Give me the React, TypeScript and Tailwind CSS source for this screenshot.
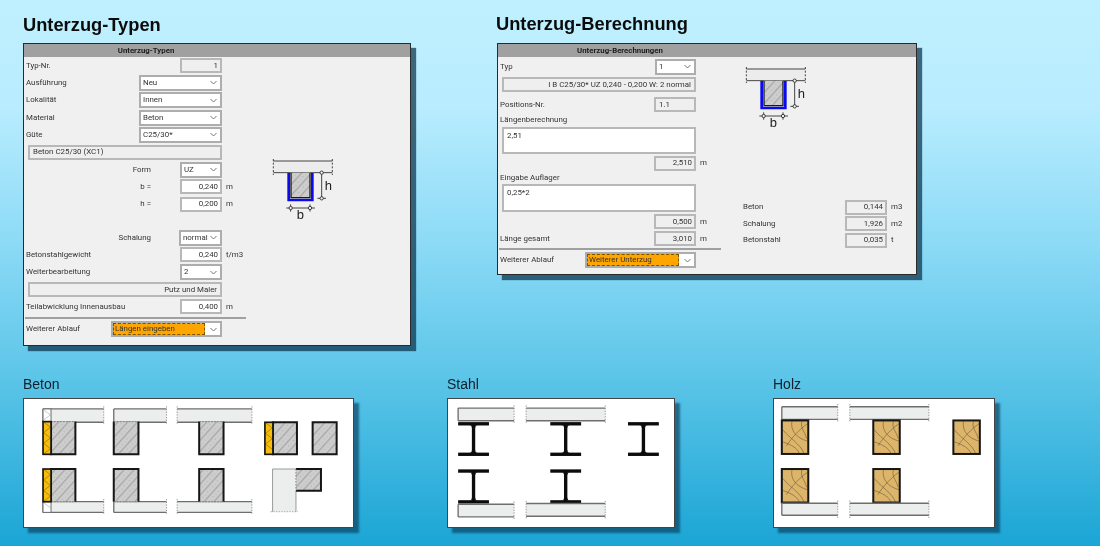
import type { ReactNode } from 'react';

const slabFill = '#eceeee';
const slabLine = '#6e6e6e';
const beamLine = '#161616';

function Chevron() {
  return (
    <svg width="7" height="5" viewBox="0 0 7 5" className="shrink-0">
      <path d="M0.5 1 L3.5 4 L6.5 1" fill="none" stroke="#666" strokeWidth="0.9" />
    </svg>
  );
}

function Select({ value, className }: { value: string; className: string }) {
  return (
    <div className={`flex h-[16px] items-center justify-between border-2 border-[#adadad] bg-white pl-[2px] pr-[3px] ${className}`}>
      <span>{value}</span>
      <Chevron />
    </div>
  );
}

function HotSelect({ value, className }: { value: string; className: string }) {
  return (
    <div className={`flex h-[16px] items-center justify-between border-2 border-[#adadad] bg-white pr-[3px] ${className}`}>
      <span className="flex h-[12px] flex-1 items-center border border-dashed border-[#7a5500] bg-[#ffa500] pl-[1px]">{value}</span>
      <span className="ml-[5px]">
        <Chevron />
      </span>
    </div>
  );
}

function Field({ value, white = false, left = false }: { value: string; white?: boolean; left?: boolean }) {
  return (
    <div
      className={`flex h-[15px] w-[42px] items-center border-2 border-[#b8b8b8] px-[2px] ${left ? 'justify-start pl-[3px]' : 'justify-end'} ${white ? 'bg-white' : 'bg-[#efefef]'}`}
    >
      {value}
    </div>
  );
}

function Row({ label, unit, right = false, children }: { label?: string; unit?: string; right?: boolean; children: ReactNode }) {
  return (
    <div className="flex h-[17.33px] items-center">
      <div className="flex w-[196px] items-center justify-between">
        <span className={right ? 'w-[125px] text-right' : ''}>{label}</span>
        {children}
      </div>
      {unit && <span className="ml-[4px]">{unit}</span>}
    </div>
  );
}

function Band({ text, right = false }: { text: string; right?: boolean }) {
  return (
    <div className={`ml-[2px] flex h-[15px] w-[194px] items-center border-2 border-[#b8b8b8] bg-[#efefef] px-[3px] ${right ? 'justify-end' : ''}`}>
      {text}
    </div>
  );
}

function Window({ title, className, children }: { title: string; className: string; children: ReactNode }) {
  return (
    <div className={`border border-[#2a2a2a] bg-[#f0f0f0] text-[7.9px] leading-none text-[#333] shadow-[5px_5px_1px_rgba(10,50,75,0.72)] ${className}`} style={{ fontFamily: 'Roboto, "Open Sans", sans-serif' }}>
      <div className="flex h-[13px] items-center bg-[#a0a0a0]">
        <span className="w-[244px] text-center text-[7.8px] font-bold text-[#1c1c1c]">{title}</span>
      </div>
      {children}
    </div>
  );
}

function Hatch({ id }: { id: string }) {
  return (
    <pattern id={id} width="22" height="22" patternUnits="userSpaceOnUse" patternTransform="rotate(-48)">
      <rect width="22" height="22" fill="#cdcdcd" />
      <line x1="0" y1="5" x2="22" y2="5" stroke="#828282" strokeWidth="2" />
      <circle cx="7" cy="16" r="1.3" fill="#8a8a8a" />
      <circle cx="17" cy="17" r="1.1" fill="#8a8a8a" />
    </pattern>
  );
}

function Section() {
  return (
    <svg width="80" height="75" viewBox="0 0 240 225" className="shrink-0">
      <defs>
        <Hatch id="sec" />
      </defs>
      <rect x="40" y="30" width="177" height="35" fill="#ececec" />
      <line x1="40" y1="30" x2="217" y2="30" stroke="#222" strokeWidth="2.5" />
      <line x1="40" y1="65" x2="217" y2="65" stroke="#222" strokeWidth="2.5" />
      <line x1="40" y1="24" x2="40" y2="72" stroke="#222" strokeWidth="2.5" strokeDasharray="6 5" />
      <line x1="217" y1="24" x2="217" y2="72" stroke="#222" strokeWidth="2.5" strokeDasharray="6 5" />
      <rect x="93" y="65" width="57" height="75" fill="url(#sec)" />
      <path d="M86 66 V147 H157 V66" fill="none" stroke="#0a0aee" strokeWidth="8" />
      <path d="M93 66 V140 H150 V66" fill="none" stroke="#1a1a1a" strokeWidth="4" />
      <line x1="185" y1="65" x2="185" y2="142" stroke="#222" strokeWidth="2.5" />
      <line x1="172" y1="142" x2="198" y2="142" stroke="#222" strokeWidth="2.5" />
      <circle cx="185" cy="65" r="5" fill="#f0f0f0" stroke="#222" strokeWidth="2.5" />
      <circle cx="185" cy="142" r="5" fill="#f0f0f0" stroke="#222" strokeWidth="2.5" />
      <line x1="79" y1="171" x2="165" y2="171" stroke="#222" strokeWidth="2.5" />
      <line x1="92" y1="160" x2="92" y2="182" stroke="#222" strokeWidth="2.5" />
      <line x1="150" y1="160" x2="150" y2="182" stroke="#222" strokeWidth="2.5" />
      <circle cx="92" cy="171" r="5" fill="#f0f0f0" stroke="#222" strokeWidth="2.5" />
      <circle cx="150" cy="171" r="5" fill="#f0f0f0" stroke="#222" strokeWidth="2.5" />
      <text x="194" y="116" fontSize="39" fill="#222" fontFamily="Liberation Sans, sans-serif">h</text>
      <text x="110" y="203" fontSize="39" fill="#222" fontFamily="Liberation Sans, sans-serif">b</text>
    </svg>
  );
}

function Slab({ x, y, w, h, closedLeft = false }: { x: number; y: number; w: number; h: number; closedLeft?: boolean }) {
  return (
    <g>
      <rect x={x} y={y} width={w} height={h} fill={slabFill} />
      <line x1={x} y1={y} x2={x + w} y2={y} stroke={slabLine} strokeWidth="4" />
      <line x1={x} y1={y + h} x2={x + w} y2={y + h} stroke={slabLine} strokeWidth="4" />
      {closedLeft ? (
        <line x1={x} y1={y} x2={x} y2={y + h} stroke={slabLine} strokeWidth="4" />
      ) : (
        <line x1={x} y1={y - 8} x2={x} y2={y + h + 8} stroke="#888" strokeWidth="2.5" strokeDasharray="4 4" />
      )}
      <line x1={x + w} y1={y - 8} x2={x + w} y2={y + h + 8} stroke="#888" strokeWidth="2.5" strokeDasharray="4 4" />
    </g>
  );
}

function Beam({ x, y, w, h, open }: { x: number; y: number; w: number; h: number; open?: 'top' | 'bottom' | 'left' }) {
  const outline = open === 'top'
    ? `M${x} ${y} V${y + h} H${x + w} V${y}`
    : open === 'bottom'
      ? `M${x} ${y + h} V${y} H${x + w} V${y + h}`
      : open === 'left'
        ? `M${x} ${y} H${x + w} V${y + h} H${x}`
        : `M${x} ${y} H${x + w} V${y + h} H${x} Z`;
  return (
    <g>
      <rect x={x} y={y} width={w} height={h} fill="url(#concrete)" />
      <path d={outline} fill="none" stroke={beamLine} strokeWidth="6" />
      {open === 'top' && <line x1={x} y1={y} x2={x + w} y2={y} stroke="#777" strokeWidth="2.5" strokeDasharray="5 4" />}
      {open === 'bottom' && <line x1={x} y1={y + h} x2={x + w} y2={y + h} stroke="#777" strokeWidth="2.5" strokeDasharray="5 4" />}
      {open === 'left' && <line x1={x} y1={y} x2={x} y2={y + h} stroke="#777" strokeWidth="2.5" strokeDasharray="5 4" />}
    </g>
  );
}

function Zigzag({ x, y, w, h, stroke }: { x: number; y: number; w: number; h: number; stroke: string }) {
  const step = 16;
  const points: string[] = [];
  for (let i = 0; i * step <= h; i++) {
    points.push(`${i % 2 ? x + w : x},${y + i * step}`);
  }
  return <polyline points={points.join(' ')} fill="none" stroke={stroke} strokeWidth="1.6" />;
}

function Insulation({ x, y, h }: { x: number; y: number; h: number }) {
  return (
    <g>
      <rect x={x} y={y} width="24" height={h} fill="#f7bd0c" />
      <Zigzag x={x + 2} y={y + 1} w={20} h={h - 2} stroke="#7a5a00" />
      <rect x={x} y={y} width="24" height={h} fill="none" stroke={beamLine} strokeWidth="5" />
    </g>
  );
}

function SlabEnd({ x, y, h }: { x: number; y: number; h: number }) {
  return (
    <g>
      <rect x={x} y={y} width="24" height={h} fill="#fff" />
      <Zigzag x={x + 1} y={y + 2} w={21} h={h - 4} stroke="#999" />
      <rect x={x} y={y} width="24" height={h} fill="none" stroke={slabLine} strokeWidth="3" />
    </g>
  );
}

function BetonDrawing() {
  return (
    <svg viewBox="13 73 986 382" className="h-full w-full">
      <defs>
        <Hatch id="concrete" />
      </defs>
      <Slab x={70} y={102} w={182} h={40} closedLeft />
      <SlabEnd x={70} y={102} h={38} />
      <Beam x={94} y={140} w={73} h={98} open="top" />
      <Insulation x={70} y={140} h={98} />
      <Slab x={282} y={102} w={158} h={40} closedLeft />
      <Beam x={282} y={140} w={74} h={98} open="top" />
      <Slab x={472} y={102} w={224} h={40} />
      <Beam x={538} y={140} w={73} h={98} open="top" />
      <Beam x={759} y={142} w={72} h={96} />
      <Insulation x={735} y={142} h={96} />
      <Beam x={878} y={142} w={72} h={96} />

      <Slab x={70} y={380} w={182} h={32} closedLeft />
      <SlabEnd x={70} y={380} h={32} />
      <Beam x={94} y={282} w={73} h={98} open="bottom" />
      <Insulation x={70} y={282} h={98} />
      <Slab x={282} y={380} w={158} h={32} closedLeft />
      <Beam x={282} y={282} w={74} h={98} open="bottom" />
      <Slab x={472} y={380} w={224} h={32} />
      <Beam x={538} y={282} w={73} h={98} open="bottom" />
      <path d="M758 410 V282 H828 V410" fill={slabFill} stroke="none" />
      <line x1="758" y1="282" x2="758" y2="410" stroke="#999" strokeWidth="3" />
      <line x1="758" y1="282" x2="828" y2="282" stroke="#999" strokeWidth="3" />
      <line x1="828" y1="347" x2="828" y2="410" stroke="#999" strokeWidth="3" />
      <line x1="752" y1="410" x2="834" y2="410" stroke="#999" strokeWidth="2.5" strokeDasharray="4 4" />
      <Beam x={828} y={282} w={75} h={65} open="left" />
    </svg>
  );
}

function IBeam({ cx, top, bottom }: { cx: number; top: number; bottom: number }) {
  return (
    <g fill="#0c0c0c">
      <rect x={cx - 46} y={top - 5} width="92" height="10" />
      <rect x={cx - 46} y={bottom - 5} width="92" height="10" />
      <rect x={cx - 5} y={top} width="10" height={bottom - top} />
      <path d={`M${cx - 13} ${top + 4} Q${cx - 5} ${top + 4} ${cx - 5} ${top + 12} H${cx + 5} Q${cx + 5} ${top + 4} ${cx + 13} ${top + 4} Z`} />
      <path d={`M${cx - 13} ${bottom - 4} Q${cx - 5} ${bottom - 4} ${cx - 5} ${bottom - 12} H${cx + 5} Q${cx + 5} ${bottom - 4} ${cx + 13} ${bottom - 4} Z`} />
    </g>
  );
}

function StahlDrawing() {
  return (
    <svg viewBox="25 73 674 382" className="h-full w-full">
      <Slab x={55} y={100} w={167} h={38} closedLeft />
      <Slab x={258} y={100} w={236} h={38} />
      <IBeam cx={101} top={147} bottom={238} />
      <IBeam cx={376} top={147} bottom={238} />
      <IBeam cx={608} top={147} bottom={238} />
      <IBeam cx={101} top={288} bottom={380} />
      <IBeam cx={376} top={288} bottom={380} />
      <Slab x={55} y={387} w={167} h={38} closedLeft />
      <Slab x={258} y={385} w={236} h={38} />
    </svg>
  );
}

function Timber({ x, y }: { x: number; y: number }) {
  return (
    <g transform={`translate(${x} ${y})`}>
      <rect width="79" height="100" fill="#dcb56a" />
      <g fill="none" stroke="#6a5a3c" strokeWidth="1.8">
        <path d="M3 28 C25 55 55 70 66 98" />
        <path d="M3 64 C28 72 48 84 52 98" />
        <path d="M30 3 C26 30 42 52 77 62" />
        <path d="M76 10 C56 24 30 50 14 76" />
        <path d="M60 3 C54 24 70 34 74 54" />
      </g>
      <rect width="79" height="100" fill="none" stroke="#161616" strokeWidth="6" />
    </g>
  );
}

function HolzDrawing() {
  return (
    <svg viewBox="29 73 656 382" className="h-full w-full">
      <Slab x={52} y={96} w={167} h={38} closedLeft />
      <Slab x={255} y={96} w={236} h={38} />
      <Timber x={52} y={137} />
      <Timber x={325} y={137} />
      <Timber x={564} y={137} />
      <Timber x={52} y={282} />
      <Timber x={325} y={282} />
      <Slab x={52} y={384} w={167} h={36} closedLeft />
      <Slab x={255} y={384} w={236} h={36} />
    </svg>
  );
}

function Card({ title, className, children }: { title: string; className: string; children: ReactNode }) {
  return (
    <div className={className}>
      <div className="flex h-[23px] items-center pb-[5px] text-[14px] text-[#10202c]">{title}</div>
      <div className="h-[130px] border border-[#444] bg-white shadow-[5px_5px_2px_rgba(10,60,90,0.65)]">{children}</div>
    </div>
  );
}

export default function App() {
  return (
    <div
      className="h-screen w-full overflow-hidden bg-[linear-gradient(180deg,#bff0ff_0%,#b8ecfe_20%,#8bdaf6_45%,#5cc5e8_69%,#1ba5d5_100%)]"
      style={{ fontFamily: '"Liberation Sans", Arial, sans-serif' }}
    >
      <div className="blur-[0.35px]">
        <div className="flex h-[375px] pl-[23px]">
          <div className="w-[388px]">
            <h1 className="flex h-[43px] items-center pt-[7px] text-[18.3px] font-bold text-[#0b0b0b]">Unterzug-Typen</h1>
            <Window title="Unterzug-Typen" className="h-[303px]">
              <div className="flex">
                <div className="w-[222px] pl-[2px]">
                  <Row label="Typ-Nr."><Field value="1" /></Row>
                  <Row label="Ausführung"><Select value="Neu" className="w-[83px]" /></Row>
                  <Row label="Lokalität"><Select value="Innen" className="w-[83px]" /></Row>
                  <Row label="Material"><Select value="Beton" className="w-[83px]" /></Row>
                  <Row label="Güte"><Select value="C25/30*" className="w-[83px]" /></Row>
                  <div className="flex h-[17.33px] items-center"><Band text="Beton C25/30 (XC1)" /></div>
                  <Row label="Form" right><Select value="UZ" className="w-[42px]" /></Row>
                  <Row label="b =" right unit="m"><Field value="0,240" white /></Row>
                  <Row label="h =" right unit="m"><Field value="0,200" white /></Row>
                  <div className="h-[16px]" />
                  <Row label="Schalung" right><Select value="normal" className="w-[43px]" /></Row>
                  <Row label="Betonstahlgewicht" unit="t/m3"><Field value="0,240" white /></Row>
                  <Row label="Weiterbearbeitung"><Select value="2" className="w-[42px]" /></Row>
                  <div className="flex h-[17.33px] items-center"><Band text="Putz und Maler" right /></div>
                  <Row label="Teilabwicklung Innenausbau" unit="m"><Field value="0,400" white /></Row>
                  <div className="mt-[1px] ml-[-1px] h-[2px] w-[221px] bg-[#a0a0a0]" />
                  <div className="mt-[2px]">
                    <Row label="Weiterer Ablauf"><HotSelect value="Längen eingeben" className="w-[111px]" /></Row>
                  </div>
                </div>
                <div className="ml-[14px] mt-[94px]">
                  <Section />
                </div>
              </div>
            </Window>
          </div>
          <div className="ml-[86px] w-[420px]">
            <h1 className="-ml-px flex h-[43px] items-center pt-[4px] text-[18.3px] font-bold text-[#0b0b0b]">Unterzug-Berechnung</h1>
            <Window title="Unterzug-Berechnungen" className="h-[232px]">
              <div className="flex">
                <div className="w-[222px] pl-[2px] pt-[1px]">
                  <Row label="Typ"><Select value="1" className="w-[41px]" /></Row>
                  <div className="mt-[1px] flex h-[17px] items-center"><Band text="I B C25/30* UZ 0,240 - 0,200 W: 2 normal" right /></div>
                  <div className="mt-[3px]">
                    <Row label="Positions-Nr."><Field value="1.1" left /></Row>
                  </div>
                  <div className="flex h-[13px] items-center">Längenberechnung</div>
                  <div className="ml-[2px] h-[27px] w-[194px] border-2 border-[#b8b8b8] bg-white pl-[3px] pt-[3px]">2,51</div>
                  <div className="mt-[1px]">
                    <Row unit="m"><span /><Field value="2,510" /></Row>
                  </div>
                  <div className="flex h-[12px] items-center">Eingabe Auflager</div>
                  <div className="ml-[2px] h-[28px] w-[194px] border-2 border-[#b8b8b8] bg-white pl-[3px] pt-[3px]">0,25*2</div>
                  <div className="mt-[1px]">
                    <Row unit="m"><span /><Field value="0,500" /></Row>
                  </div>
                  <Row label="Länge gesamt" unit="m"><Field value="3,010" /></Row>
                  <div className="ml-[-1px] h-[2px] w-[222px] bg-[#a0a0a0]" />
                  <div className="mt-[2px]">
                    <Row label="Weiterer Ablauf"><HotSelect value="Weiterer Unterzug" className="w-[111px]" /></Row>
                  </div>
                </div>
                <div className="flex flex-col pl-[13px] pt-[2px]">
                  <Section />
                  <div className="ml-[10px] mt-[65px] flex flex-col">
                    {[['Beton', '0,144', 'm3'], ['Schalung', '1,926', 'm2'], ['Betonstahl', '0,035', 't']].map(([name, value, unit]) => (
                      <div key={name} className="flex h-[16.5px] items-center">
                        <span className="w-[102px]">{name}</span>
                        <Field value={value} />
                        <span className="ml-[4px]">{unit}</span>
                      </div>
                    ))}
                  </div>
                </div>
              </div>
            </Window>
          </div>
        </div>
        <div className="flex pl-[23px]">
          <Card title="Beton" className="w-[331px]"><BetonDrawing /></Card>
          <Card title="Stahl" className="ml-[93px] w-[228px]"><StahlDrawing /></Card>
          <Card title="Holz" className="ml-[98px] w-[222px]"><HolzDrawing /></Card>
        </div>
      </div>
    </div>
  );
}
